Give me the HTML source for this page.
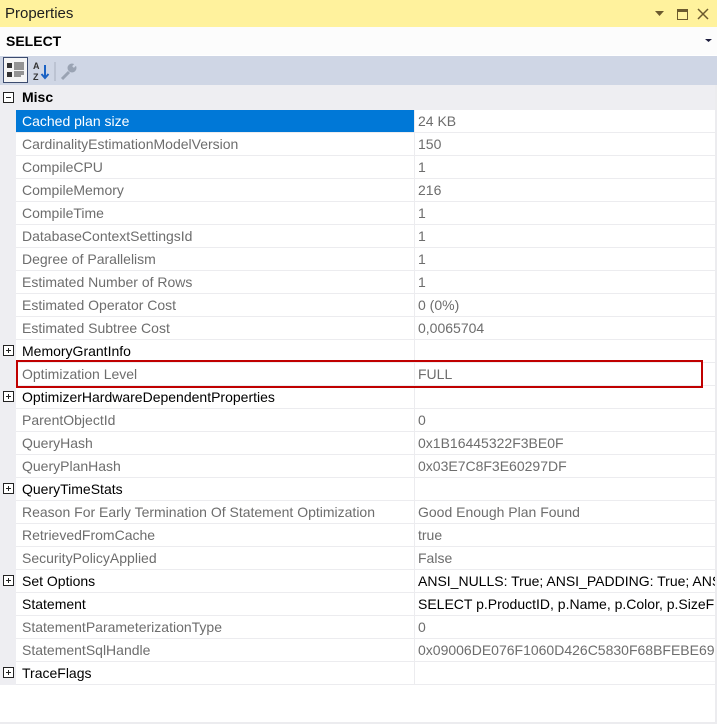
<!DOCTYPE html>
<html><head><style>
*{margin:0;padding:0;box-sizing:border-box}
body{width:717px;height:724px;overflow:hidden;background:#fff;font-family:"Liberation Sans",sans-serif;font-size:14px;position:relative}
.t{position:absolute;left:0;top:0;width:717px;height:27px;background:#fff29d;color:#1e1e1e;font-size:15px;line-height:27px;padding-left:5px}
.s{position:absolute;left:0;top:27px;width:717px;height:28px;background:#fcfcfc;font-weight:bold;font-size:14px;line-height:28px;padding-left:6px;color:#000}
.tb{position:absolute;left:0;top:56px;width:717px;height:29px;background:#cfd6e5}
.g{position:absolute;left:0;top:85px;width:16px;height:600px;background:#eeeef2}
.m{position:absolute;left:0;top:85px;width:717px;height:25px;background:#eeeef2;font-weight:bold;line-height:25px;padding-left:22px}
.r{position:absolute;left:16px;width:701px;height:23px;border-bottom:1px solid #ececef;white-space:nowrap;overflow:hidden;line-height:22px}
.r .n{position:absolute;left:6px;top:0;color:#6d6d6d}
.r .v{position:absolute;left:398px;top:0;width:310px;color:#6d6d6d;border-left:1px solid #ececef;padding-left:3px;height:23px}
.r.b .n,.r.b .v{color:#000}
.sel{background:#0078d7}
.sel .n{color:#fff}
.sel .v{background:#fff}
.pl{position:absolute;left:3px;width:11px;height:11px;border:1px solid #222;background:#fff}
.pl:before{content:"";position:absolute;left:2px;top:4px;width:5px;height:1px;background:#222}
.pl.p:after{content:"";position:absolute;left:4px;top:2px;width:1px;height:5px;background:#222}
</style></head><body>
<div class="t">Properties</div>
<svg style="position:absolute;left:653px;top:8px" width="62" height="14"><path d="M2 3h9l-4.5 5z" fill="#6b5a2e"/><rect x="24.5" y="1.5" width="10" height="10" fill="none" stroke="#6b5a2e"/><rect x="24" y="1" width="11" height="3" fill="#6b5a2e"/><path d="M45 1l10 10M55 1l-10 10" stroke="#6b5a2e" stroke-width="1.5"/></svg>
<div class="s">SELECT</div>
<svg style="position:absolute;left:705px;top:39px" width="8" height="5"><path d="M0 0h7l-3.5 3z" fill="#1e1e3e"/></svg>
<div class="tb"></div>
<svg style="position:absolute;left:3px;top:57px" width="80" height="27">
<rect x="0.5" y="0.5" width="24" height="25" fill="#f5f5f5" stroke="#3c4b6e"/>
<rect x="4" y="6" width="5" height="5" fill="#333"/><rect x="4" y="15" width="5" height="5" fill="#333"/>
<path d="M11 6h10M11 8h10M11 10h10M11 12h10M11 15h10M11 17h10M11 19h7" stroke="#333"/>
<text x="30" y="12" font-size="9" font-weight="bold" fill="#333" font-family="Liberation Sans">A</text>
<text x="30" y="23" font-size="9" font-weight="bold" fill="#333" font-family="Liberation Sans">Z</text>
<path d="M42 8v13M38.5 17l3.5 4 3.5-4" stroke="#1a62c4" stroke-width="2" fill="none"/>
<path d="M52 5v19" stroke="#a8b0c0"/>
<path d="M59 22l7-7" stroke="#9aa3b3" stroke-width="3"/>
<circle cx="69" cy="11" r="4.5" fill="#9aa3b3"/>
<path d="M70 10l4-4" stroke="#cfd6e5" stroke-width="2.5"/>
</svg>
<div class="g"></div>
<div class="m">Misc</div>
<div class="pl" style="top:92px"></div>

<div class="r sel" style="top:110px"><span class="n">Cached plan size</span><span class="v">24 KB</span></div>
<div class="r" style="top:133px"><span class="n">CardinalityEstimationModelVersion</span><span class="v">150</span></div>
<div class="r" style="top:156px"><span class="n">CompileCPU</span><span class="v">1</span></div>
<div class="r" style="top:179px"><span class="n">CompileMemory</span><span class="v">216</span></div>
<div class="r" style="top:202px"><span class="n">CompileTime</span><span class="v">1</span></div>
<div class="r" style="top:225px"><span class="n">DatabaseContextSettingsId</span><span class="v">1</span></div>
<div class="r" style="top:248px"><span class="n">Degree of Parallelism</span><span class="v">1</span></div>
<div class="r" style="top:271px"><span class="n">Estimated Number of Rows</span><span class="v">1</span></div>
<div class="r" style="top:294px"><span class="n">Estimated Operator Cost</span><span class="v">0 (0%)</span></div>
<div class="r" style="top:317px"><span class="n">Estimated Subtree Cost</span><span class="v">0,0065704</span></div>
<div class="r b" style="top:340px"><span class="n">MemoryGrantInfo</span><span class="v"></span></div>
<div class="r" style="top:363px"><span class="n">Optimization Level</span><span class="v">FULL</span></div>
<div class="r b" style="top:386px"><span class="n">OptimizerHardwareDependentProperties</span><span class="v"></span></div>
<div class="r" style="top:409px"><span class="n">ParentObjectId</span><span class="v">0</span></div>
<div class="r" style="top:432px"><span class="n">QueryHash</span><span class="v">0x1B16445322F3BE0F</span></div>
<div class="r" style="top:455px"><span class="n">QueryPlanHash</span><span class="v">0x03E7C8F3E60297DF</span></div>
<div class="r b" style="top:478px"><span class="n">QueryTimeStats</span><span class="v"></span></div>
<div class="r" style="top:501px"><span class="n">Reason For Early Termination Of Statement Optimization</span><span class="v">Good Enough Plan Found</span></div>
<div class="r" style="top:524px"><span class="n">RetrievedFromCache</span><span class="v">true</span></div>
<div class="r" style="top:547px"><span class="n">SecurityPolicyApplied</span><span class="v">False</span></div>
<div class="r b" style="top:570px"><span class="n">Set Options</span><span class="v">ANSI_NULLS: True; ANSI_PADDING: True; ANSI_WARNINGS: True</span></div>
<div class="r b" style="top:593px"><span class="n">Statement</span><span class="v">SELECT p.ProductID, p.Name, p.Color, p.SizeFrom</span></div>
<div class="r" style="top:616px"><span class="n">StatementParameterizationType</span><span class="v">0</span></div>
<div class="r" style="top:639px"><span class="n">StatementSqlHandle</span><span class="v">0x09006DE076F1060D426C5830F68BFEBE69B0000</span></div>
<div class="r b" style="top:662px"><span class="n">TraceFlags</span><span class="v"></span></div>
<div class="pl p" style="top:345px"></div>
<div class="pl p" style="top:391px"></div>
<div class="pl p" style="top:483px"></div>
<div class="pl p" style="top:575px"></div>
<div class="pl p" style="top:667px"></div>
<div style="position:absolute;left:16px;top:360px;width:687px;height:28px;border:2px solid #c00000"></div>
<div style="position:absolute;left:0;top:722px;width:717px;height:2px;background:#ececef"></div>
<div style="position:absolute;left:715px;top:85px;width:2px;height:639px;background:#ececef"></div>
</body></html>
